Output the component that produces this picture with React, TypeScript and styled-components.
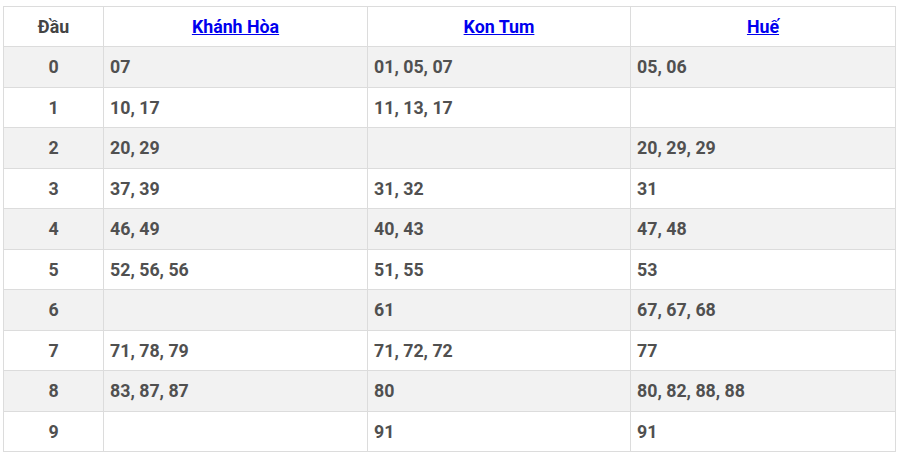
import React from "react";
import styled, { createGlobalStyle } from "styled-components";

const GlobalStyle = createGlobalStyle`
	html, body {
		margin: 0;
		padding: 0;
		background: #fff;
	}
	body {
		font-family: Roboto, "Liberation Sans", Arial, sans-serif;
	}
`;

const Page = styled.div`
	padding: 6px 5px 0 3px;
	width: 900px;
	box-sizing: border-box;
	height: 452px;
	display: flex;
`;

const Table = styled.table`
	width: 892px;
	border-collapse: collapse;
	table-layout: fixed;
	font-size: 17.8px;
	font-weight: 700;
	color: #505050;
	flex: none;
`;

const Edge = styled.div`
	width: 2px;
	margin-left: 1px;
	background: #e4e4e4;
	align-self: stretch;
	margin-top: -6px;
`;

const HeadCell = styled.th<{ $w: number }>`
	box-sizing: border-box;
	width: ${(p) => p.$w}px;
	height: 40px;
	padding: 0 6px;
	border: 1px solid #dcdcdc;
	background: #fff;
	text-align: center;
	font-weight: 700;
	color: #444;

	a {
		color: #0000ee;
		text-decoration: underline;
	}
`;

const Row = styled.tr<{ $striped: boolean }>`
	height: 40.4px;
	background: ${(p) => (p.$striped ? "#f2f2f2" : "#fff")};
`;

const Cell = styled.td<{ $center?: boolean }>`
	padding: 0 6px;
	border: 1px solid #dcdcdc;
	text-align: ${(p) => (p.$center ? "center" : "left")};
	vertical-align: middle;
`;

const provinces = [
	{ name: "Khánh Hòa", w: 264 },
	{ name: "Kon Tum", w: 263 },
	{ name: "Huế", w: 265 },
];

const rows: string[][] = [
	["07", "01, 05, 07", "05, 06"],
	["10, 17", "11, 13, 17", ""],
	["20, 29", "", "20, 29, 29"],
	["37, 39", "31, 32", "31"],
	["46, 49", "40, 43", "47, 48"],
	["52, 56, 56", "51, 55", "53"],
	["", "61", "67, 67, 68"],
	["71, 78, 79", "71, 72, 72", "77"],
	["83, 87, 87", "80", "80, 82, 88, 88"],
	["", "91", "91"],
];

export default function App() {
	return (
		<>
			<GlobalStyle />
			<Page>
				<Table>
					<thead>
						<tr>
							<HeadCell $w={100}>Đầu</HeadCell>
							{provinces.map((p) => (
								<HeadCell key={p.name} $w={p.w}>
									<a href="#">{p.name}</a>
								</HeadCell>
							))}
						</tr>
					</thead>
					<tbody>
						{rows.map((r, i) => (
							<Row key={i} $striped={i % 2 === 0}>
								<Cell $center>{i}</Cell>
								{r.map((v, j) => (
									<Cell key={j}>{v}</Cell>
								))}
							</Row>
						))}
					</tbody>
				</Table>
				<Edge />
			</Page>
		</>
	);
}
